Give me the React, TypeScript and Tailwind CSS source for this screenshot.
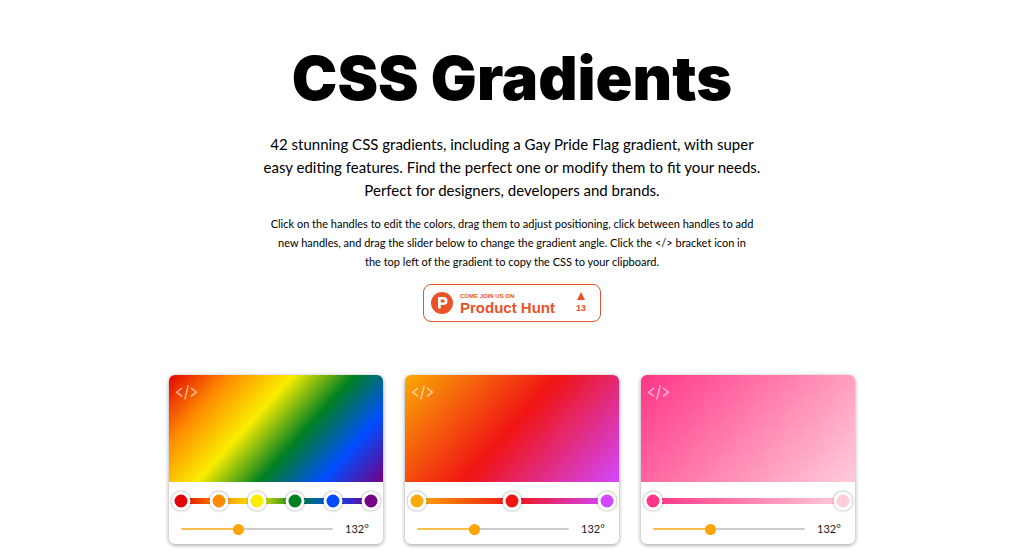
import { useState } from 'react';

type Stop = { color: string; at: number };
type Gradient = { name: string; angle: number; stops: Stop[] };

const gradients: Gradient[] = [
  {
    name: 'Pride Flag',
    angle: 132,
    stops: [
      { color: '#e20404', at: 0 },
      { color: '#ff8c00', at: 20 },
      { color: '#faed00', at: 40 },
      { color: '#008023', at: 60 },
      { color: '#004dff', at: 80 },
      { color: '#750085', at: 100 },
    ],
  },
  {
    name: 'Sunset',
    angle: 132,
    stops: [
      { color: '#fba905', at: 0 },
      { color: '#f01414', at: 50 },
      { color: '#d247ff', at: 100 },
    ],
  },
  {
    name: 'Pink',
    angle: 132,
    stops: [
      { color: '#ff3687', at: 0 },
      { color: '#ffcdd9', at: 100 },
    ],
  },
];

const toCss = (angle: number, stops: Stop[]) =>
  `linear-gradient(${angle}deg, ${stops.map((s) => `${s.color} ${s.at}%`).join(', ')})`;

function CodeIcon() {
  return (
    <svg viewBox="0 0 22 16" className="h-4 w-[22px]" fill="none" stroke="currentColor" strokeWidth="1.5" aria-hidden="true">
      <path d="M7 4 1.7 8.2l5.3 4.2M16 4l5.3 4.2L16 12.4M13.2 1.4 9.8 15.4" />
    </svg>
  );
}

function GradientCard({ gradient }: { gradient: Gradient }) {
  const [angle, setAngle] = useState(gradient.angle);
  const background = toCss(angle, gradient.stops);
  const share = (angle / 360) * 100;

  return (
    <article className="overflow-hidden rounded-md bg-white shadow-[0_1px_4px_rgba(0,0,0,0.4)]">
      <div className="aspect-[2/1] px-1.5 py-[9px]" style={{ background }}>
        <button
          type="button"
          aria-label={`Copy ${gradient.name} CSS`}
          className="block text-white/60"
          onClick={() => navigator.clipboard?.writeText(`background: ${background};`)}
        >
          <CodeIcon />
        </button>
      </div>
      <div className="px-3 pt-4">
        <div className="relative h-1.5" style={{ background: toCss(90, gradient.stops) }}>
          {gradient.stops.map((stop) => (
            <button
              key={stop.at}
              type="button"
              aria-label={`${gradient.name} color at ${stop.at}%`}
              className="absolute top-1/2 size-[19px] -translate-x-1/2 -translate-y-1/2 rounded-full border-3 border-white shadow-[0_0_2px_1px_rgba(0,0,0,0.2)]"
              style={{ left: `${stop.at}%`, backgroundColor: stop.color }}
            />
          ))}
        </div>
      </div>
      <div className="flex items-center gap-3 px-3 pt-4 pb-1.5">
        <input
          type="range"
          min={0}
          max={360}
          value={angle}
          aria-label={`${gradient.name} angle`}
          onChange={(e) => setAngle(Number(e.target.value))}
          className="h-0.5 min-w-0 flex-1 appearance-none rounded-full [&::-webkit-slider-thumb]:size-[11px] [&::-webkit-slider-thumb]:appearance-none [&::-webkit-slider-thumb]:rounded-full [&::-webkit-slider-thumb]:bg-[#ffa500]"
          style={{ background: `linear-gradient(90deg, #f5c04d ${share}%, #cccccc ${share}%)` }}
        />
        <output className="w-[26px] text-[11px] leading-[18px] text-[#222]">{angle}°</output>
      </div>
    </article>
  );
}

function ProductHuntBadge() {
  return (
    <a
      href="#product-hunt"
      className="flex h-[38px] w-[178px] items-center rounded-lg border border-[#da552f] bg-white pr-3.5 pl-[7px] font-['Liberation_Sans',Arial,sans-serif] font-bold text-[#ea532a]"
    >
      <svg viewBox="0 0 22 22" className="size-[22px]" aria-hidden="true">
        <circle cx="11" cy="11" r="11" fill="#ea532a" />
        <path
          fill="#fff"
          fillRule="evenodd"
          d="M7 5h5.5a4 4 0 0 1 0 8H9.7v3.6H7zM9.7 7.5v3h2.6a1.5 1.5 0 0 0 0-3z"
        />
      </svg>
      <span className="ml-[7px] flex flex-col text-left">
        <span className="text-[6px] leading-[8px]">COME JOIN US ON</span>
        <span className="text-[15px] leading-[15px]">Product Hunt</span>
      </span>
      <span className="ml-auto flex flex-col items-center gap-0.5">
        <svg viewBox="0 0 8 8" className="size-2" aria-hidden="true">
          <path d="M4 0 8 8H0z" fill="currentColor" />
        </svg>
        <span className="text-[9px] leading-[12px]">13</span>
      </span>
    </a>
  );
}

export default function App() {
  return (
    <main className="flex flex-col items-center bg-white px-4 pt-9 pb-4 font-[Lato,sans-serif] text-black">
      <header className="flex flex-col items-center text-center">
        <h1 className="font-[Inter,sans-serif] text-[61px] leading-[84px] font-black">CSS Gradients</h1>
        <p className="mt-[13px] text-[15px] leading-[23px]">
          42 stunning CSS gradients, including a Gay Pride Flag gradient, with super
          <br />
          easy editing features. Find the perfect one or modify them to fit your needs.
          <br />
          Perfect for designers, developers and brands.
        </p>
        <p className="mt-3 mb-[13px] text-[11px] leading-[19px]">
          Click on the handles to edit the colors, drag them to adjust positioning, click between handles to add
          <br />
          new handles, and drag the slider below to change the gradient angle. Click the &lt;/&gt; bracket icon in
          <br />
          the top left of the gradient to copy the CSS to your clipboard.
        </p>
        <ProductHuntBadge />
      </header>
      <section className="mt-[53px] grid w-full max-w-[686px] grid-cols-3 gap-[22px]" aria-label="Gradients">
        {gradients.map((g) => (
          <GradientCard key={g.name} gradient={g} />
        ))}
      </section>
    </main>
  );
}
